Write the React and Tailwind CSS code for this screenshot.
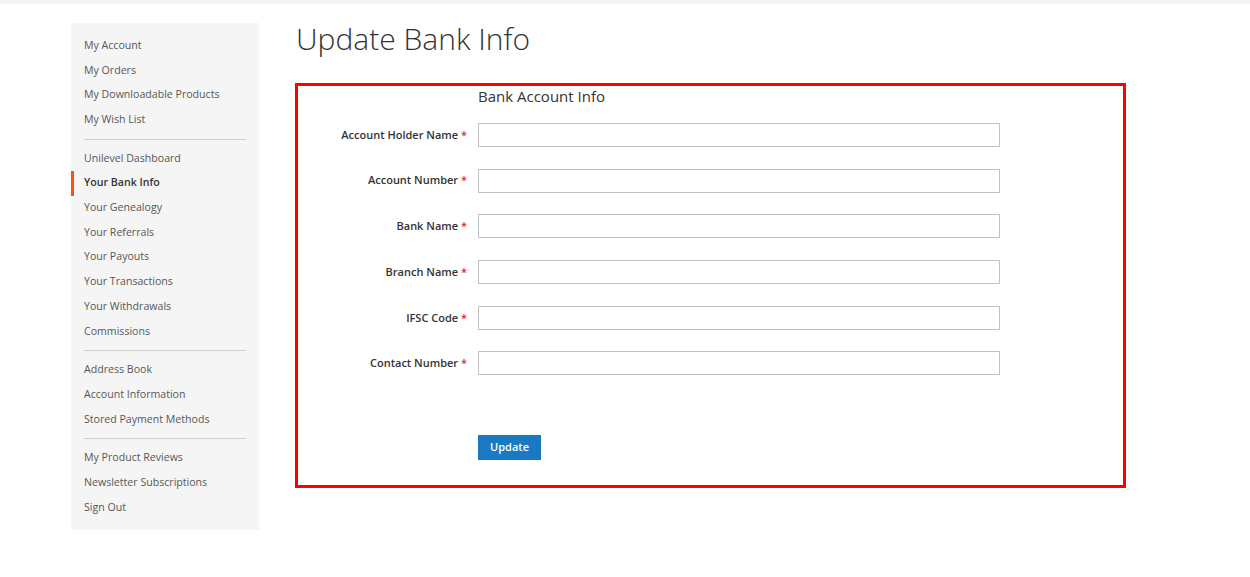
import React from "react";

const groups = [
  ["My Account", "My Orders", "My Downloadable Products", "My Wish List"],
  [
    "Unilevel Dashboard",
    "Your Bank Info",
    "Your Genealogy",
    "Your Referrals",
    "Your Payouts",
    "Your Transactions",
    "Your Withdrawals",
    "Commissions",
  ],
  ["Address Book", "Account Information", "Stored Payment Methods"],
  ["My Product Reviews", "Newsletter Subscriptions", "Sign Out"],
];

const fields = [
  "Account Holder Name",
  "Account Number",
  "Bank Name",
  "Branch Name",
  "IFSC Code",
  "Contact Number",
];

function Sidebar() {
  return (
    <div className="w-[188px] shrink-0 bg-[#f5f5f5] pt-[10.6px] pb-[9.6px] mt-[19px]">
      {groups.map((items, gi) => (
        <div key={gi}>
          {gi > 0 && <div className="mx-[13px] my-[6.5px] h-px bg-[#d1d1d1]" />}
          {items.map((label) => {
            const active = label === "Your Bank Info";
            return (
              <div
                key={label}
                className={
                  active
                    ? "h-[24.7px] flex items-center pl-[10px] border-l-[3px] border-[#ff5501] text-[#333] font-semibold text-[10.6px]"
                    : "h-[24.7px] flex items-center pl-[13px] text-[#575757] text-[10.6px]"
                }
              >
                {label}
              </div>
            );
          })}
        </div>
      ))}
    </div>
  );
}

export default function App() {
  return (
    <div className="min-h-screen bg-white font-['Open_Sans',sans-serif]">
      <div className="h-[4px] bg-[#f4f4f4]" />
      <div className="flex pl-[71px]">
        <Sidebar />

        {/* content */}
        <div className="ml-[36px] w-[831px]">
          <h1 className="mt-[15px] ml-[1px] text-[30px] leading-[40px] font-light text-[#333]">
            Update Bank Info
          </h1>

          <div className="mt-[24px] border-[3px] border-[#ff0000] h-[405px]">
            <div className="pl-[180px] text-[15px] leading-[20px] text-[#333]">
              Bank Account Info
            </div>

            <div className="mt-[17px] flex flex-col gap-[21.7px]">
              {fields.map((f) => (
                <div key={f} className="flex items-center">
                  <div className="w-[180px] pr-[11px] text-right text-[11px] font-semibold text-[#333]">
                    {f} <span className="text-[#e02b27]">*</span>
                  </div>
                  <input
                    type="text"
                    className="w-[522px] h-[24px] border border-[#c2c2c2] bg-white outline-none"
                  />
                </div>
              ))}
            </div>

            <div className="pl-[180px] mt-[58px]">
              <button className="w-[63px] h-[25px] bg-[#1979c3] text-white text-[11px] font-semibold">
                Update
              </button>
            </div>
          </div>
        </div>
      </div>
    </div>
  );
}
